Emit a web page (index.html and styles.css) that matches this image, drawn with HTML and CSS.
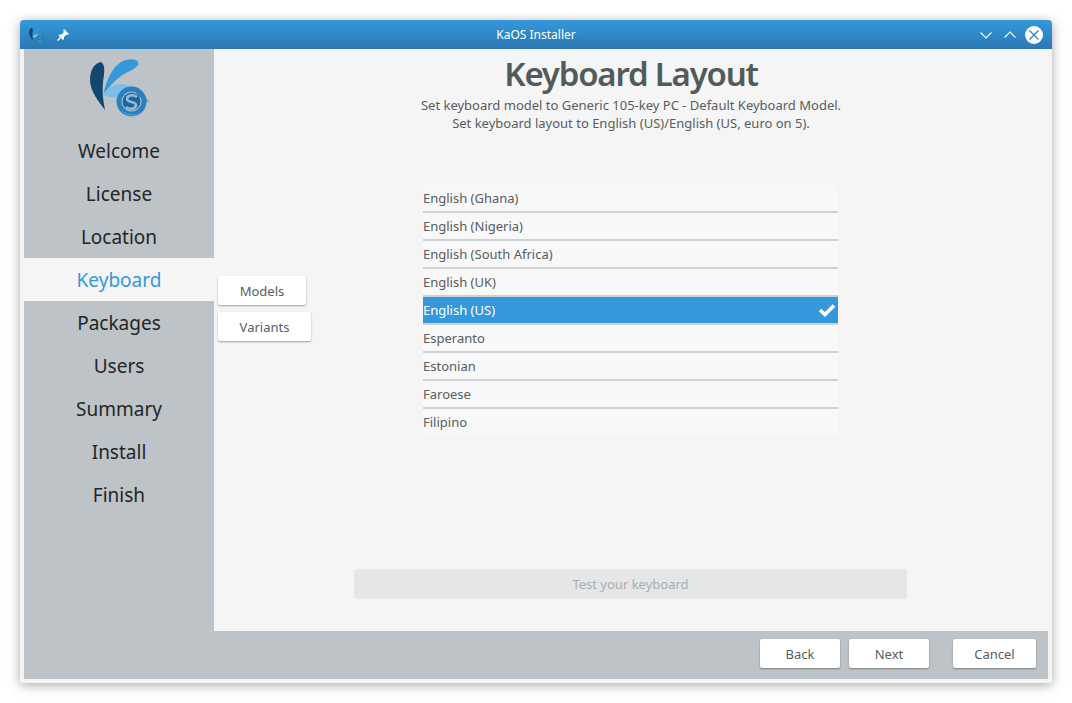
FILE: index.html
```html
<!DOCTYPE html>
<html lang="en">
<head>
  <meta charset="UTF-8" />
  <title>KaOS Installer</title>
  <link rel="stylesheet" href="styles.css">
</head>
<body>

  <svg class="defs" width="0" height="0">
    <symbol id="kaosLogo" viewBox="0 0 60 60">
      <path d="M11 4 C4 5 0 13 0 22 C0 33 9 44 15 52 C13 42 12 34 13 24 C14 16 16 7 11 4 Z" fill="#12476f"/>
      <path d="M14 35 C16 22 24 5 36 2 C43 0 50 2 48 7 C44 13 33 14 24 24 C20 28 17 32 14 35 Z" fill="#3498db"/>
      <path d="M13 37 C18 30 24 26 29 26 C37 26 46 29 50 33 C42 31 34 33 29 38 C23 40 17 39 13 37 Z" fill="#7cbde9"/>
      <path d="M44 31 C50 33 55 39 60 45 C55 42 52 40 48 39 Z" fill="#3f97d6"/>
      <circle cx="41.5" cy="43.5" r="12.5" fill="none" stroke="#2a80bf" stroke-width="5"/>
      <circle cx="41.5" cy="43.5" r="9" fill="#1c659c"/>
      <path d="M47 39 C43 36 37 37 37 41 C37 45 46 43 46 47 C46 51 40 52 36 49" fill="none" stroke="#8fbbdc" stroke-width="2.6"/>
      <path d="M30 52 C36 59 46 60 52 54 C46 57 38 57 30 52 Z" fill="#3f97d6"/>
    </symbol>
  </svg>

  <div class="window">
    <div class="titlebar">
      <div class="titlebar-left">
        <svg class="app-icon" width="16" height="16"><use href="#kaosLogo"/></svg>
        <svg class="pin-icon" width="14" height="14" viewBox="0 0 14 14">
          <path d="M8 1 L13 6 L11.6 7 L10.6 6.4 L8 9 L8 11 L7 12 L2.5 7.5 L3.5 6.5 L5.5 6.5 L8 4 L7.2 2.6 Z" fill="#fff"/>
          <path d="M4.6 9.4 L1.5 12.6" stroke="#fff" stroke-width="1.4"/>
        </svg>
      </div>
      <div class="window-title">KaOS Installer</div>
      <div class="titlebar-right">
        <svg width="14" height="14" viewBox="0 0 14 14"><path d="M1.5 4.5 L7 10 L12.5 4.5" fill="none" stroke="#fff" stroke-width="1.1"/></svg>
        <svg width="14" height="14" viewBox="0 0 14 14"><path d="M1.5 9.5 L7 4 L12.5 9.5" fill="none" stroke="#fff" stroke-width="1.1"/></svg>
        <svg class="close-icon" width="18" height="18" viewBox="0 0 18 18">
          <circle cx="9" cy="9" r="9" fill="#fff"/>
          <path d="M4.5 4.5 L13.5 13.5 M13.5 4.5 L4.5 13.5" stroke="#2a80bf" stroke-width="1.2"/>
        </svg>
      </div>
    </div>

    <div class="content">
      <div class="columns">
        <div class="sidebar">
          <div class="logo"><svg width="60" height="60"><use href="#kaosLogo"/></svg></div>
          <div class="step">Welcome</div>
          <div class="step">License</div>
          <div class="step">Location</div>
          <div class="step active">Keyboard</div>
          <div class="step">Packages</div>
          <div class="step">Users</div>
          <div class="step">Summary</div>
          <div class="step">Install</div>
          <div class="step">Finish</div>
        </div>

        <div class="main">
          <h1>Keyboard Layout</h1>
          <p class="summary">Set keyboard model to Generic 105-key PC - Default Keyboard Model.<br>Set keyboard layout to English (US)/English (US, euro on 5).</p>

          <div class="picker">
            <div class="tabs">
              <button class="btn btn-models">Models</button>
              <button class="btn btn-variants">Variants</button>
            </div>
            <div class="layouts">
              <div class="row">English (Ghana)</div>
              <div class="row">English (Nigeria)</div>
              <div class="row">English (South Africa)</div>
              <div class="row">English (UK)</div>
              <div class="row selected">English (US)
                <svg class="check" width="18" height="14" viewBox="0 0 18 14"><path d="M2 7 L7 11.5 L16 2.5" fill="none" stroke="#fff" stroke-width="3.6"/></svg>
              </div>
              <div class="row">Esperanto</div>
              <div class="row">Estonian</div>
              <div class="row">Faroese</div>
              <div class="row">Filipino</div>
            </div>
          </div>

          <div class="test-box">Test your keyboard</div>
        </div>
      </div>

      <div class="footer">
        <button class="btn btn-nav">Back</button>
        <button class="btn btn-nav">Next</button>
        <button class="btn btn-cancel">Cancel</button>
      </div>
    </div>
  </div>

</body>
</html>
```

FILE: styles.css
```css
body {
  margin: 0;
  padding: 20px;
  background: #fff;
  font-family: "Noto Sans", sans-serif;
  font-size: 13px;
  color: #555d61;
}

.defs {
  position: absolute;
}

.window {
  width: 1032px;
  height: 663px;
  display: flex;
  flex-direction: column;
  border-radius: 4px 4px 2px 2px;
  background: #f3f4f4;
  box-shadow: 0 2px 12px rgba(0,0,0,0.35);
}

.titlebar {
  height: 29px;
  flex: none;
  display: flex;
  align-items: center;
  justify-content: space-between;
  padding: 0 9px;
  border-radius: 4px 4px 0 0;
  background: linear-gradient(to bottom, #3498db, #2a78b3);
  color: #fff;
  font-size: 12px;
}

.titlebar-left, .titlebar-right {
  width: 150px;
  display: flex;
  align-items: center;
}

.titlebar-left {
  gap: 11px;
}

.titlebar-right {
  justify-content: flex-end;
  gap: 10px;
}

.close-icon {
  margin-left: -2px;
}

.content {
  flex: 1;
  display: flex;
  flex-direction: column;
  padding: 0 4px 4px;
}

.columns {
  flex: 1;
  display: flex;
}

.sidebar {
  width: 190px;
  background: #bdc3c7;
}

.logo {
  height: 80px;
  padding-left: 66px;
  padding-top: 9px;
  box-sizing: border-box;
}

.step {
  height: 43px;
  line-height: 45px;
  text-align: center;
  font-size: 19px;
  color: #232627;
}

.step.active {
  margin-left: -2px;
  padding-left: 2px;
  background: #f5f5f5;
  color: #3498db;
}

.main {
  flex: 1;
  display: flex;
  flex-direction: column;
  background: #f5f5f5;
}

h1 {
  margin: 2px 0 0;
  font-size: 33px;
  line-height: 45px;
  font-weight: 600;
  letter-spacing: -1.2px;
  text-align: center;
  color: #515b59;
}

.summary {
  margin: 0;
  line-height: 18px;
  text-align: center;
}

.picker {
  margin-top: 53px;
  padding-left: 4px;
  display: flex;
}

.tabs {
  width: 205px;
  padding-top: 91px;
  display: flex;
  flex-direction: column;
  align-items: flex-start;
  gap: 7px;
}

.btn {
  height: 29px;
  padding: 0;
  border: none;
  border-radius: 2px;
  background: #fff;
  box-shadow: 0 1px 2px rgba(0,0,0,0.35);
  font-family: inherit;
  font-size: 13px;
  color: #555d61;
}

.btn-models { width: 88px; }
.btn-variants { width: 93px; }
.btn-nav { width: 80px; }
.btn-cancel { width: 83px; margin-left: 15px; }

.layouts {
  width: 415px;
}

.row {
  height: 26px;
  line-height: 26px;
  border-bottom: 2px solid #ced1d3;
  background: #f8f8f8;
  position: relative;
}

.row:last-child {
  border-bottom: none;
}

.row.selected {
  background: #3498db;
  color: #fff;
}

.check {
  position: absolute;
  right: 2px;
  top: 6px;
}

.test-box {
  width: 553px;
  height: 30px;
  line-height: 30px;
  margin: 134px 0 0 140px;
  border-radius: 4px;
  background: #e4e6e7;
  text-align: center;
  color: #a9adb0;
}

.footer {
  height: 48px;
  flex: none;
  box-sizing: border-box;
  padding: 8px 12px 0 0;
  display: flex;
  justify-content: flex-end;
  align-items: flex-start;
  gap: 9px;
  background: #bdc3c7;
}
```
